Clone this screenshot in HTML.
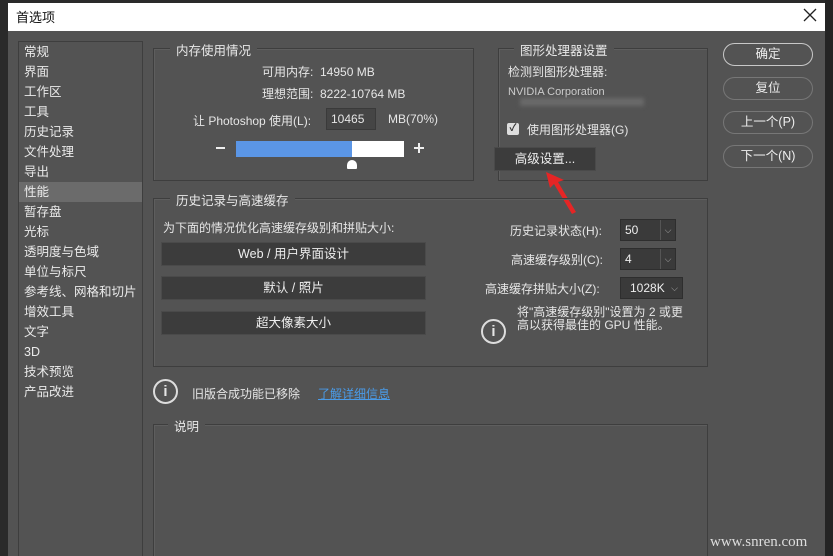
<!DOCTYPE html>
<html><head><meta charset="utf-8"><style>
*{margin:0;padding:0;box-sizing:border-box}
html,body{width:833px;height:556px;overflow:hidden}
body{background:#535353;position:relative;font-family:"Liberation Sans","Noto Sans CJK SC",sans-serif;font-size:12px;color:#e6e6e6}
.a{position:absolute;white-space:nowrap}
.box{position:absolute;border:1px solid #3e3e3e;box-shadow:inset 1px 1px 0 #5e5e5e}
.lg{position:absolute;background:#535353;padding:0 6px;font-size:12.5px;color:#e8e8e8}
.btn{position:absolute;background:#3c3c3c;border:1px solid #4a4a4a;text-align:center;color:#eee;font-size:12.5px;line-height:22px}
.pill{position:absolute;left:723px;width:90px;height:23px;border:1px solid #9a9a9a;border-radius:12px;text-align:center;line-height:21px;font-size:12.5px;color:#eee}
.sel{position:absolute;background:#3a3a3a;border:1px solid #2e2e2e;height:22px;color:#eee;font-size:12px;line-height:20px;padding-left:4px}
.sel i{position:absolute;right:0;top:0;width:15px;height:20px;border-left:1px solid #555;font-style:normal;text-align:center;color:#aaa;font-size:9px}
.side div{height:20px;line-height:20px;padding-left:5px;font-size:12.5px}
</style></head><body>
<div class="a" style="left:0;top:0;width:833px;height:3px;background:#2a2a2a"></div>
<div class="a" style="left:0;top:0;width:8px;height:556px;background:#2a2a2a"></div>
<div class="a" style="left:825px;top:0;width:8px;height:556px;background:#242424"></div>
<div class="a" style="left:8px;top:3px;width:817px;height:28px;background:#fff"></div>
<div class="a" style="left:16px;top:7px;color:#111;font-size:13px">首选项</div>
<svg class="a" style="left:803px;top:8px" width="14" height="14"><path d="M1 1L13 13M13 1L1 13" stroke="#222" stroke-width="1.3"/></svg>

<div class="a side" style="left:18px;top:41px;width:125px;height:515px;border:1px solid #3e3e3e;border-bottom:none;color:#eaeaea">
<div>常规</div><div>界面</div><div>工作区</div><div>工具</div><div>历史记录</div><div>文件处理</div><div>导出</div><div style="background:#6b6b6b">性能</div><div>暂存盘</div><div>光标</div><div>透明度与色域</div><div>单位与标尺</div><div>参考线、网格和切片</div><div>增效工具</div><div>文字</div><div>3D</div><div>技术预览</div><div>产品改进</div>
</div>

<div class="box" style="left:153px;top:48px;width:321px;height:133px"></div>
<div class="lg" style="left:170px;top:40px">内存使用情况</div>
<div class="a" style="left:262px;top:63px">可用内存:&nbsp;&nbsp;14950 MB</div>
<div class="a" style="left:262px;top:85px">理想范围:&nbsp;&nbsp;8222-10764 MB</div>
<div class="a" style="left:193px;top:112px">让 Photoshop 使用(L):</div>
<div class="a" style="left:326px;top:108px;width:50px;height:22px;background:#454545;border:1px solid #3a3a3a;padding:3px 4px">10465</div>
<div class="a" style="left:388px;top:112px">MB(70%)</div>
<div class="a" style="left:216px;top:147px;width:9px;height:2px;background:#eee"></div>
<div class="a" style="left:236px;top:141px;width:168px;height:16px;background:#fff"></div>
<div class="a" style="left:236px;top:141px;width:116px;height:16px;background:#5b96e6"></div>
<div class="a" style="left:347px;top:160px;width:10px;height:9px;background:#fff;border-radius:5px 5px 1px 1px"></div>
<div class="a" style="left:414px;top:147px;width:10px;height:2px;background:#eee"></div>
<div class="a" style="left:418px;top:143px;width:2px;height:10px;background:#eee"></div>

<div class="box" style="left:498px;top:48px;width:210px;height:133px"></div>
<div class="lg" style="left:514px;top:40px">图形处理器设置</div>
<div class="a" style="left:508px;top:63px">检测到图形处理器:</div>
<div class="a" style="left:508px;top:86px;font-size:11px;color:#ccc">NVIDIA Corporation</div>
<div class="a" style="left:520px;top:98px;width:124px;height:8px;background:#6a6a6a;filter:blur(2px)"></div>
<div class="a" style="left:507px;top:123px;width:12px;height:12px;background:#ddd;border-radius:2px;color:#333;font-size:10px;line-height:12px;text-align:center;font-weight:bold">✓</div>
<div class="a" style="left:527px;top:121px">使用图形处理器(G)</div>
<div class="btn" style="left:494px;top:147px;width:102px;height:24px;text-align:center">高级设置...</div>
<svg class="a" style="left:540px;top:168px" width="40" height="50"><polygon points="6,4 24,12 18,14 36,44 32,46 14,16 10,20" fill="#e52525"/></svg>

<div class="box" style="left:153px;top:198px;width:555px;height:169px"></div>
<div class="lg" style="left:170px;top:190px">历史记录与高速缓存</div>
<div class="a" style="left:163px;top:219px">为下面的情况优化高速缓存级别和拼贴大小:</div>
<div class="btn" style="left:161px;top:242px;width:265px;height:24px">Web / 用户界面设计</div>
<div class="btn" style="left:161px;top:276px;width:265px;height:24px">默认 / 照片</div>
<div class="btn" style="left:161px;top:311px;width:265px;height:24px">超大像素大小</div>
<div class="a" style="left:510px;top:222px">历史记录状态(H):</div>
<div class="sel" style="left:620px;top:219px;width:56px">50<i>⌵</i></div>
<div class="a" style="left:511px;top:251px">高速缓存级别(C):</div>
<div class="sel" style="left:620px;top:248px;width:56px">4<i>⌵</i></div>
<div class="a" style="left:485px;top:280px">高速缓存拼贴大小(Z):</div>
<div class="sel" style="left:620px;top:277px;width:63px;padding-left:9px">1028K<i style="border:none">⌵</i></div>
<div class="a" style="left:481px;top:319px;width:25px;height:25px;border:2px solid #ddd;border-radius:50%;text-align:center;font-weight:bold;font-size:15px;line-height:21px">i</div>
<div class="a" style="left:517px;top:306px;line-height:13px;font-size:12px">将"高速缓存级别"设置为 2 或更<br>高以获得最佳的 GPU 性能。</div>

<div class="a" style="left:153px;top:379px;width:25px;height:25px;border:2px solid #ddd;border-radius:50%;text-align:center;font-weight:bold;font-size:15px;line-height:21px">i</div>
<div class="a" style="left:192px;top:385px">旧版合成功能已移除</div>
<div class="a" style="left:318px;top:385px;color:#4a9be8;text-decoration:underline">了解详细信息</div>

<div class="box" style="left:153px;top:424px;width:555px;height:132px;border-bottom:none"></div>
<div class="lg" style="left:168px;top:416px">说明</div>

<div class="pill" style="top:43px;border-color:#c8c8c8">确定</div>
<div class="pill" style="top:77px;border-color:#777">复位</div>
<div class="pill" style="top:111px;border-color:#777">上一个(P)</div>
<div class="pill" style="top:145px;border-color:#777">下一个(N)</div>

<div class="a" style="left:710px;top:534px;font-family:'Liberation Serif',serif;font-size:15px;color:#ddd">www.snren.com</div>
</body></html>
